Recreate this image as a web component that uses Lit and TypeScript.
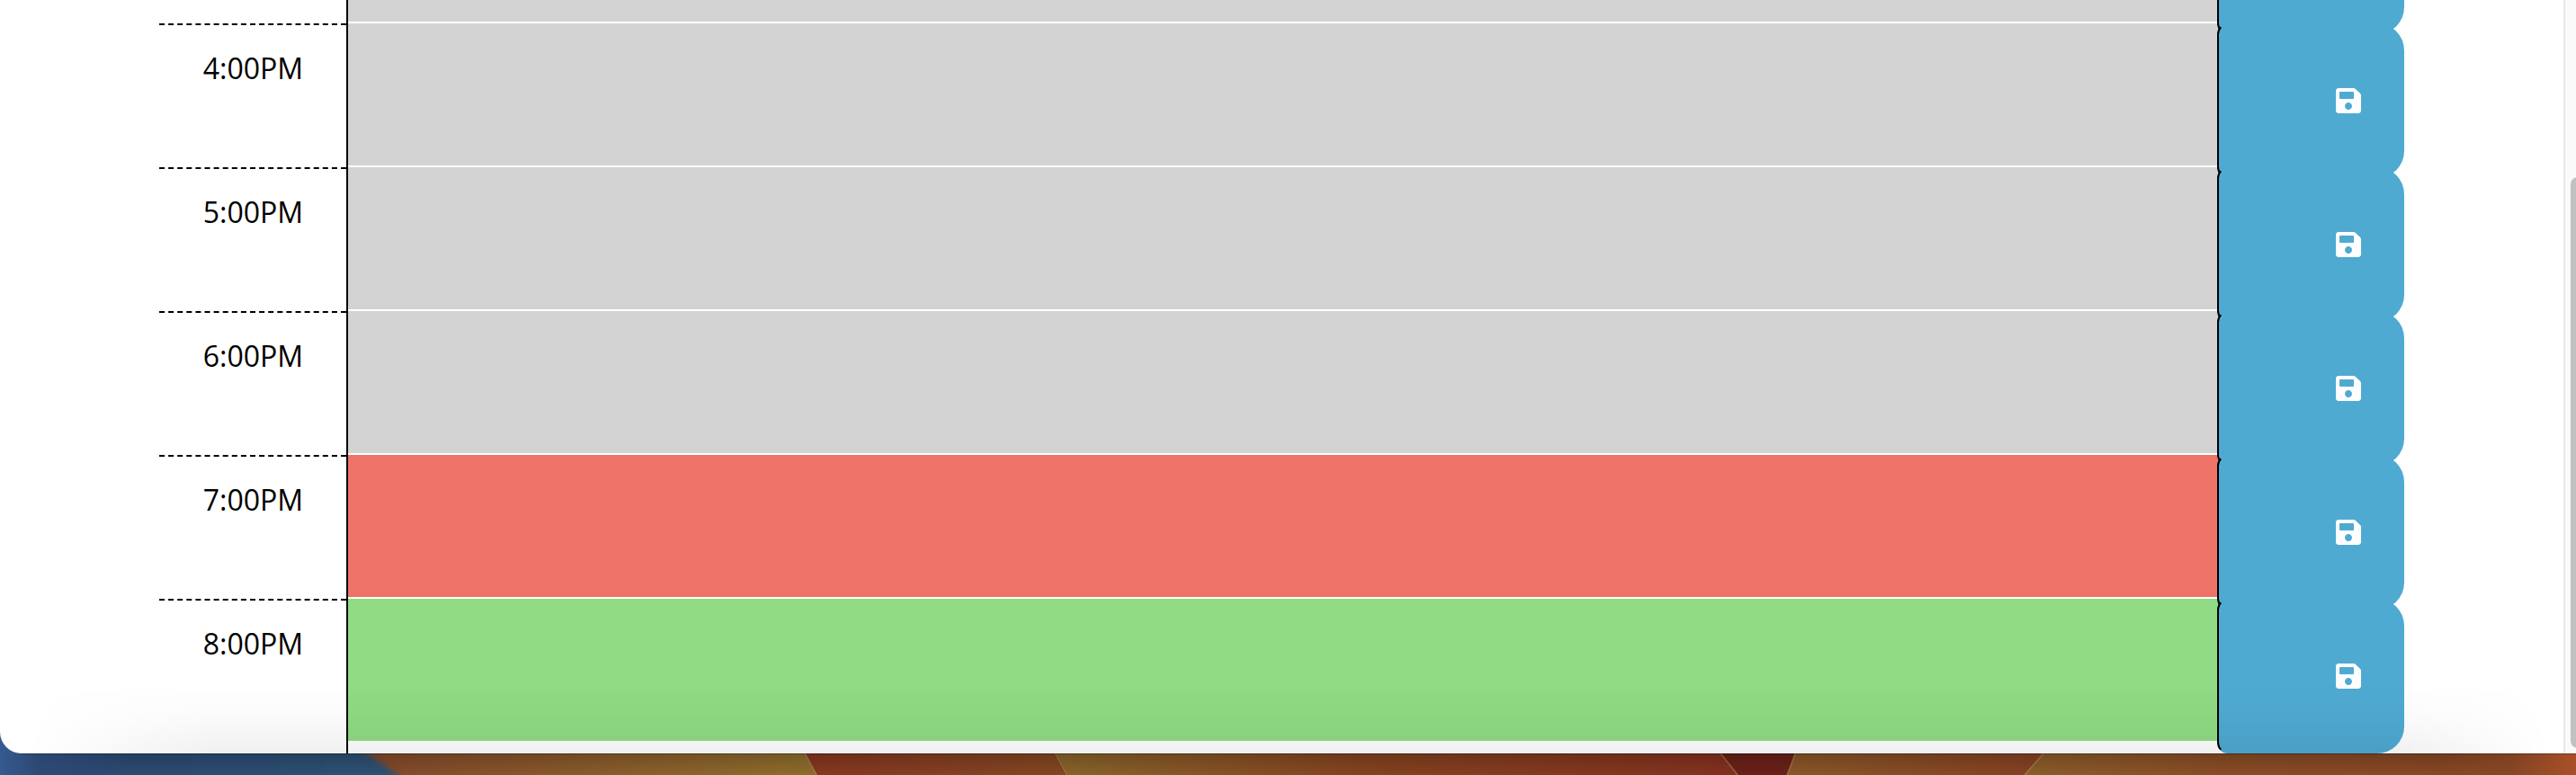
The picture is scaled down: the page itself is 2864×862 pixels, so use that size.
import { LitElement, html, css, svg } from "lit";
import { customElement, property } from "lit/decorators.js";

type Phase = "past" | "present" | "future";

interface Hour {
  label: string;
  phase: Phase;
}

const HOURS: Hour[] = [
  { label: "", phase: "past" },
  { label: "4:00PM", phase: "past" },
  { label: "5:00PM", phase: "past" },
  { label: "6:00PM", phase: "past" },
  { label: "7:00PM", phase: "present" },
  { label: "8:00PM", phase: "future" },
];

const saveIcon = svg`
  <path fill="currentColor" d="M433.941 129.941l-83.882-83.882A48 48 0 0 0 316.118 32H48C21.49 32 0 53.49 0 80v352c0 26.51 21.49 48 48 48h352c26.51 0 48-21.49 48-48V163.882a48 48 0 0 0-14.059-33.941zM224 416c-35.346 0-64-28.654-64-64 0-35.346 28.654-64 64-64s64 28.654 64 64c0 35.346-28.654 64-64 64zm96-304.52V212c0 6.627-5.373 12-12 12H76c-6.627 0-12-5.373-12-12V108c0-6.627 5.373-12 12-12h228.52c3.183 0 6.235 1.264 8.485 3.515l3.48 3.48A11.996 11.996 0 0 1 320 111.48z"/>
`;

/** One hour of the day: label, note field and save button. */
@customElement("time-block")
export class TimeBlock extends LitElement {
  @property() label = "";
  @property() phase: Phase = "past";

  static styles = css`
    :host {
      display: grid;
      grid-template-columns: 1fr 10fr 1fr;
      height: 172px;
      flex: none;
      margin-bottom: -12px;
    }
    :host(:last-child) {
      margin-bottom: 0;
    }
    .hour {
      border-top: 2px dashed #000;
      padding: 26px 48px 0 0;
      text-align: right;
      font-size: 32px;
      line-height: 44px;
      color: #000;
    }
    .slot {
      border-left: 2px solid #000;
    }
    .note {
      display: block;
      box-sizing: border-box;
      width: calc(100% + 12px);
      height: 160px;
      margin: 0;
      padding: 12px;
      border: 0;
      border-bottom: 2px solid #fff;
      border-radius: 0;
      outline: 0;
      resize: none;
      color: #000;
      font: inherit;
      font-size: 32px;
      background-clip: padding-box;
    }
    .past {
      background-color: #d3d3d3;
    }
    .present {
      background-color: #ed7369;
    }
    .future {
      background-color: #90db84;
    }
    .save {
      position: relative;
      z-index: 1;
      display: flex;
      align-items: center;
      justify-content: flex-end;
      margin: 0;
      padding: 0 46px 0 0;
      border: 2px solid #4faad2;
      border-left-color: #000;
      border-radius: 12px 30px 30px 12px;
      background: #4faad2;
      color: #fff;
      cursor: pointer;
    }
    .icon {
      display: block;
      width: 28px;
      height: 32px;
    }
  `;

  render() {
    return html`
      <label class="hour" for="note">${this.label}</label>
      <div class="slot">
        <textarea id="note" class="note ${this.phase}"></textarea>
      </div>
      <button class="save" type="button" aria-label="Save">
        <svg class="icon" viewBox="0 0 448 512" aria-hidden="true">${saveIcon}</svg>
      </button>
    `;
  }
}

@customElement("app-root")
export class AppRoot extends LitElement {
  static styles = css`
    :host {
      display: flex;
      flex-direction: column;
      position: relative;
      height: 100vh;
      overflow: hidden;
      box-sizing: border-box;
      padding-bottom: 24px;
      font-family: "Open Sans", "Noto Sans", sans-serif;
    }
    .wallpaper {
      position: absolute;
      left: 0;
      bottom: 0;
      width: 100%;
      height: 64px;
    }
    .window {
      position: relative;
      flex: 1;
      min-height: 0;
      display: flex;
      overflow: hidden;
      background: #fff;
      border-bottom-left-radius: 24px;
    }
    .window::after {
      content: "";
      position: absolute;
      z-index: 2;
      left: 0;
      right: 0;
      bottom: 0;
      height: 80px;
      pointer-events: none;
      background: linear-gradient(to bottom, rgba(0, 0, 0, 0), rgba(0, 0, 0, 0.02) 50%, rgba(0, 0, 0, 0.06));
      mask-image: linear-gradient(to right, transparent 30px, #000 240px, #000 calc(100% - 200px), transparent calc(100% - 30px));
    }
    .planner {
      flex: 1;
      min-width: 0;
      display: flex;
      flex-direction: column;
      justify-content: flex-end;
      padding: 0 177px;
    }
    .track {
      box-sizing: border-box;
      width: 14px;
      padding: 197px 0 6px 6px;
      border-left: 2px solid #e8e8e8;
      background: #fafafa;
    }
    .thumb {
      width: 16px;
      height: 100%;
      border-radius: 8px;
      background: #c1c1c1;
    }
  `;

  render() {
    return html`
      <svg class="wallpaper" viewBox="0 0 2864 64" preserveAspectRatio="none" aria-hidden="true">
        <defs>
          <linearGradient id="sea"><stop offset="0" stop-color="#3d64a0" /><stop offset=".15" stop-color="#2d4b78" /><stop offset="1" stop-color="#2f5476" /></linearGradient>
          <linearGradient id="ochre"><stop offset="0" stop-color="#87492c" /><stop offset="1" stop-color="#92702d" /></linearGradient>
          <linearGradient id="rust"><stop offset="0" stop-color="#8a3822" /><stop offset="1" stop-color="#874923" /></linearGradient>
          <linearGradient id="ember"><stop offset="0" stop-color="#8c672c" /><stop offset=".45" stop-color="#884521" /><stop offset="1" stop-color="#883220" /></linearGradient>
          <linearGradient id="clay"><stop offset="0" stop-color="#8d5a29" /><stop offset="1" stop-color="#8a4224" /></linearGradient>
          <linearGradient id="sand"><stop offset="0" stop-color="#8e602b" /><stop offset=".35" stop-color="#8e4f27" /><stop offset=".88" stop-color="#8b4825" /><stop offset="1" stop-color="#aa5028" /></linearGradient>
          <linearGradient id="shade" x2="0" y2="1"><stop offset="0" stop-color="#000" stop-opacity=".2" /><stop offset="1" stop-color="#000" stop-opacity=".02" /></linearGradient>
          <linearGradient id="fade"><stop offset="0" stop-color="#000" /><stop offset=".05" stop-color="#fff" /><stop offset=".95" stop-color="#fff" /><stop offset="1" stop-color="#000" /></linearGradient>
          <mask id="ends"><rect y="40" width="2864" height="24" fill="url(#fade)" /></mask>
          <filter id="soft" x="-5%" width="110%" y="-50%" height="200%"><feGaussianBlur stdDeviation="3" /></filter>
        </defs>
        <path fill="url(#ochre)" d="M380 0H873L908 64H380z" />
        <path fill="url(#sea)" filter="url(#soft)" d="M-30 -20H340L408 40L442 64L470 84H-30z" />
        <path fill="url(#rust)" d="M895 40H1173L1186 64H908z" />
        <path fill="url(#ember)" d="M1173 40H1913L1932 64H1186z" />
        <path fill="#6d221a" d="M1913 40H1996L1987 64H1932z" />
        <path fill="url(#clay)" d="M1996 40H2272L2251 64H1987z" />
        <path fill="url(#sand)" d="M2272 40H2864V64H2251z" />
        <path fill="none" stroke="#b08a50" stroke-opacity=".4" stroke-width="2" d="M895 40l13 24M1913 40l19 24M1996 40l-9 24M2272 40l-21 24" />
        <rect y="40" width="2864" height="24" fill="url(#shade)" mask="url(#ends)" />
        <rect x="24" y="40" width="2840" height="1" fill="#000" fill-opacity=".3" />
      </svg>
      <main class="window">
        <section class="planner">
          ${HOURS.map(
            (h) => html`<time-block .label=${h.label} .phase=${h.phase}></time-block>`
          )}
        </section>
        <div class="track"><div class="thumb"></div></div>
      </main>
    `;
  }
}
